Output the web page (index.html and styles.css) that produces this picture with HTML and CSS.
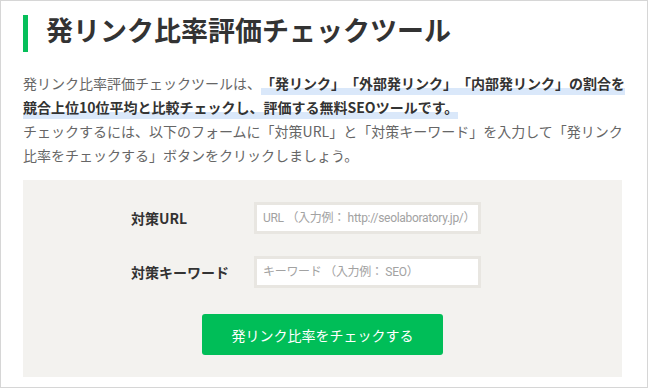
FILE: index.html
```html
<!DOCTYPE html>
<html lang="ja">
<head>
    <meta charset="UTF-8">
    <meta name="viewport" content="width=device-width, initial-scale=1.0">
    <title>発リンク比率評価チェックツール</title>
    <link rel="stylesheet" href="styles.css">
</head>
<body>
    <div class="page">
        <h1 class="title">発リンク比率評価チェックツール</h1>
        <p class="lead">発リンク比率評価チェックツールは、<strong class="marker">「発リンク」「外部発リンク」「内部発リンク」の割合を</strong><strong class="marker">競合上位10位平均と比較チェックし、評価する無料SEOツールです。</strong><br>チェックするには、以下のフォームに「対策URL」と「対策キーワード」を入力して「発リンク比率をチェックする」ボタンをクリックしましょう。</p>
        <form class="check-form" onsubmit="return false;">
            <div class="form-row">
                <label for="target-url">対策URL</label>
                <input type="text" id="target-url" placeholder="URL （入力例： http://seolaboratory.jp/）">
            </div>
            <div class="form-row">
                <label for="target-keyword">対策キーワード</label>
                <input type="text" id="target-keyword" placeholder="キーワード （入力例： SEO）">
            </div>
            <button type="submit" class="btn">発リンク比率をチェックする</button>
        </form>
    </div>
</body>
</html>
```

FILE: styles.css
```css
html, body {
    margin: 0;
    padding: 0;
    background: #fff;
}
body {
    font-family: "Noto Sans CJK JP", sans-serif;
    color: #666;
    text-spacing-trim: space-all;
}
.page {
    box-sizing: border-box;
    width: 648px;
    height: 388px;
    border: 1px solid #d6d6d6;
    padding: 14px 20px 0 22px;
}
.title {
    margin: 0;
    border-left: 5px solid #06bf5a;
    padding: 0 0 8px 18px;
    font-size: 27px;
    line-height: 29px;
    font-weight: bold;
    color: #333;
}
.lead {
    margin: 19px 0 0;
    font-size: 14px;
    line-height: 24px;
}
.marker {
    font-weight: bold;
    color: #333;
    padding-bottom: 2px;
    background: linear-gradient(transparent 68%, #dae8fa 68%);
}
.check-form {
    margin: 13px 5px 0 0;
    background: #f3f2ef;
    padding: 22px 0;
    display: flex;
    flex-direction: column;
}
.form-row {
    display: flex;
    align-items: center;
    margin-left: 108px;
    margin-bottom: 22px;
}
.form-row label {
    width: 123px;
    font-size: 14px;
    font-weight: bold;
    color: #333;
}
.form-row input {
    box-sizing: border-box;
    width: 227px;
    height: 32px;
    border: 3px solid #e8e6e1;
    background: #fff;
    padding: 0 6px;
    font-family: Roboto, "Noto Sans CJK JP", sans-serif;
    font-size: 12px;
    letter-spacing: -0.3px;
    color: #333;
    outline: none;
}
.form-row input::placeholder {
    color: #a2a2a2;
}
.btn {
    align-self: center;
    margin-top: 4px;
    width: 241px;
    height: 41px;
    border: none;
    border-radius: 3px;
    background: #00be58;
    color: #fff;
    font-family: "Noto Sans CJK JP", sans-serif;
    font-size: 14px;
    cursor: pointer;
}
```
